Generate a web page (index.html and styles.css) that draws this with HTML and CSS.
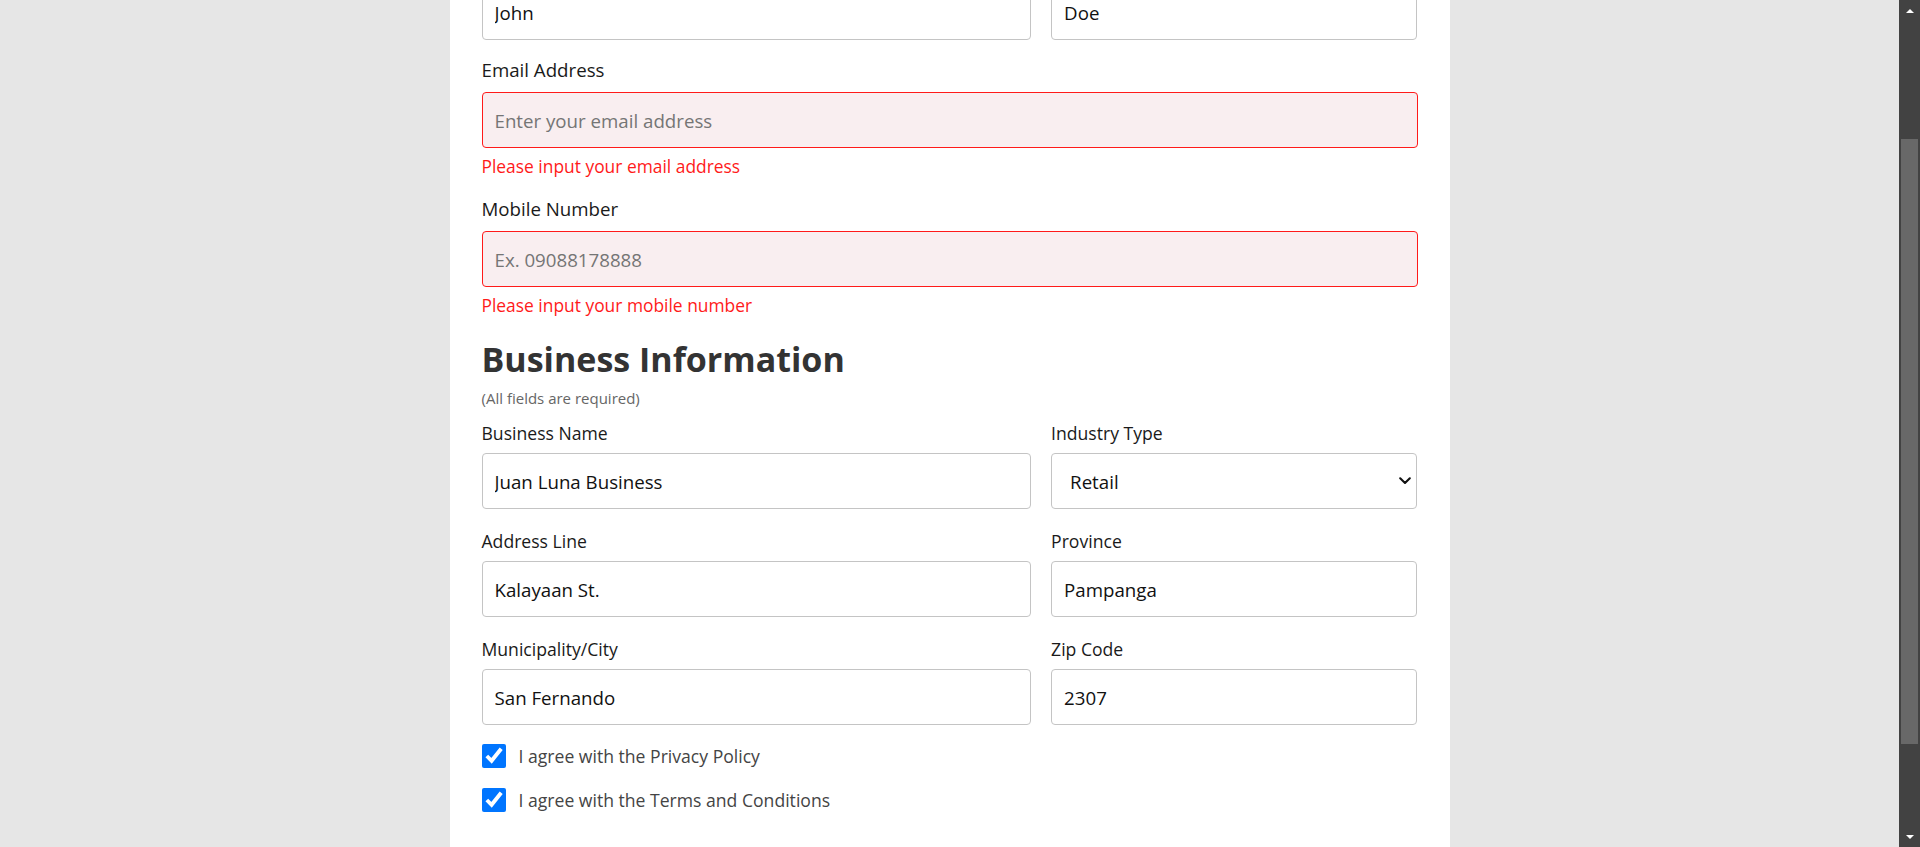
FILE: index.html
```html
<!DOCTYPE html>
<html lang="en">
<head>
<meta charset="utf-8">
<title>Registration</title>
<link rel="stylesheet" href="styles.css">
</head>
<body>
<div class="page">
  <main class="viewport">
    <div class="card">
      <form class="form">
        <section class="section section-personal">
          <h2 class="section-title">Personal Information</h2>
          <p class="section-note">(All fields are required)</p>
          <div class="grid-2">
            <div class="field">
              <label class="label" for="first">First Name</label>
              <input class="input" id="first" type="text" value="John">
            </div>
            <div class="field">
              <label class="label" for="last">Last Name</label>
              <input class="input" id="last" type="text" value="Doe">
            </div>
          </div>
          <div class="field">
            <label class="label" for="email">Email Address</label>
            <input class="input is-invalid" id="email" type="email" placeholder="Enter your email address">
            <p class="error">Please input your email address</p>
          </div>
          <div class="field">
            <label class="label" for="mobile">Mobile Number</label>
            <input class="input is-invalid" id="mobile" type="tel" placeholder="Ex. 09088178888">
            <p class="error">Please input your mobile number</p>
          </div>
        </section>

        <section class="section section-business">
          <h2 class="section-title">Business Information</h2>
          <p class="section-note">(All fields are required)</p>
          <div class="grid-2">
            <div class="field">
              <label class="label" for="bname">Business Name</label>
              <input class="input" id="bname" type="text" value="Juan Luna Business">
            </div>
            <div class="field">
              <label class="label" for="industry">Industry Type</label>
              <div class="select-wrap">
                <select class="input select" id="industry">
                  <option>Retail</option>
                  <option>Food</option>
                  <option>Services</option>
                </select>
                <svg class="select-chevron" width="12" height="8" viewBox="0 0 12 8" aria-hidden="true">
                  <path d="M1.2 1.3 L6 6 L10.8 1.3" fill="none" stroke="#111" stroke-width="2.1" stroke-linecap="round" stroke-linejoin="round"/>
                </svg>
              </div>
            </div>
            <div class="field">
              <label class="label" for="address">Address Line</label>
              <input class="input" id="address" type="text" value="Kalayaan St.">
            </div>
            <div class="field">
              <label class="label" for="province">Province</label>
              <input class="input" id="province" type="text" value="Pampanga">
            </div>
            <div class="field">
              <label class="label" for="city">Municipality/City</label>
              <input class="input" id="city" type="text" value="San Fernando">
            </div>
            <div class="field">
              <label class="label" for="zip">Zip Code</label>
              <input class="input" id="zip" type="text" value="2307">
            </div>
          </div>
        </section>

        <div class="agreements">
          <label class="check">
            <input class="check-box" type="checkbox" checked>
            <span class="check-text">I agree with the Privacy Policy</span>
          </label>
          <label class="check">
            <input class="check-box" type="checkbox" checked>
            <span class="check-text">I agree with the Terms and Conditions</span>
          </label>
        </div>
      </form>
    </div>
  </main>

  <div class="scrollbar" aria-hidden="true">
    <div class="sb-button"><span class="sb-arrow sb-arrow-up"></span></div>
    <div class="sb-track"><div class="sb-thumb"></div></div>
    <div class="sb-button"><span class="sb-arrow sb-arrow-down"></span></div>
  </div>
</div>
</body>
</html>
```

FILE: styles.css
```css
html,
body {
  margin: 0;
  height: 100%;
}

body {
  font-family: "Open Sans", "Noto Sans", "Liberation Sans", sans-serif;
  background: #e6e6e6;
  overflow: hidden;
  color: #111;
}

.page {
  display: flex;
  height: 100vh;
}

.viewport {
  flex: 1;
  min-width: 0;
  overflow: hidden;
}

.card {
  box-sizing: border-box;
  width: 1000px;
  min-height: calc(100vh + 167px);
  margin: -167px auto 0;
  padding: 32px 32px 40px;
  background: #fff;
}

.form {
  display: flex;
  flex-direction: column;
}

.section {
  display: flex;
  flex-direction: column;
}

.section-title {
  margin: 2px 0 8px;
  font-size: 34px;
  line-height: 42px;
  font-weight: 700;
  color: #333;
}

.section-note {
  margin: 0 0 13px;
  font-size: 15px;
  line-height: 20px;
  color: #666;
}

.grid-2 {
  display: grid;
  grid-template-columns: 3fr 2fr;
  column-gap: 20px;
}

.field {
  display: flex;
  flex-direction: column;
  min-width: 0;
}

.label {
  display: block;
  margin-bottom: 8px;
  font-size: 17.6px;
  line-height: 24px;
  color: #1a1a1a;
}

/* personal section: larger labels, fields stacked with margins */
.section-personal .field {
  margin-bottom: 18px;
}

.section-personal .label {
  margin-bottom: 10px;
  font-size: 18.7px;
}

/* business section: grid rows */
.section-business .grid-2 {
  row-gap: 20px;
}

.input {
  box-sizing: border-box;
  width: 100%;
  height: 56px;
  margin: 0;
  padding: 0 12px;
  border: 1px solid #c4c4c4;
  border-radius: 4px;
  background: #fff;
  font-family: inherit;
  font-size: 18.7px;
  color: #111;
  outline: none;
}

.input::placeholder {
  color: #757575;
}

.input.is-invalid {
  border-color: #ff1a1a;
  background: #f9eef0;
}

.select-wrap {
  position: relative;
}

.select {
  appearance: none;
  -webkit-appearance: none;
  padding: 0 32px 0 18px;
}

.select-chevron {
  position: absolute;
  right: 6px;
  top: 24px;
  pointer-events: none;
}

.error {
  margin: 6px 0 1px;
  font-size: 17.4px;
  line-height: 24px;
  color: #ff1a1a;
}

.agreements {
  display: flex;
  flex-direction: column;
  gap: 20px;
  margin-top: 19px;
}

.check {
  display: flex;
  align-items: center;
  gap: 13px;
}

.check-box {
  width: 24px;
  height: 24px;
  margin: 0;
  accent-color: #0075ff;
}

.check-text {
  font-size: 17.6px;
  line-height: 24px;
  color: #444;
}

/* fake window scrollbar */
.scrollbar {
  display: flex;
  flex-direction: column;
  width: 21px;
  flex: none;
  background: #424242;
}

.sb-button {
  height: 21px;
  display: flex;
  align-items: center;
  justify-content: center;
  flex: none;
}

.sb-arrow {
  width: 0;
  height: 0;
  border-left: 4px solid transparent;
  border-right: 4px solid transparent;
}

.sb-arrow-up {
  border-bottom: 4px solid #fff;
}

.sb-arrow-down {
  border-top: 4px solid #fff;
}

.sb-track {
  flex: 1;
  padding: 118px 2px 0;
}

.sb-thumb {
  height: 605px;
  background: #686868;
}
```
